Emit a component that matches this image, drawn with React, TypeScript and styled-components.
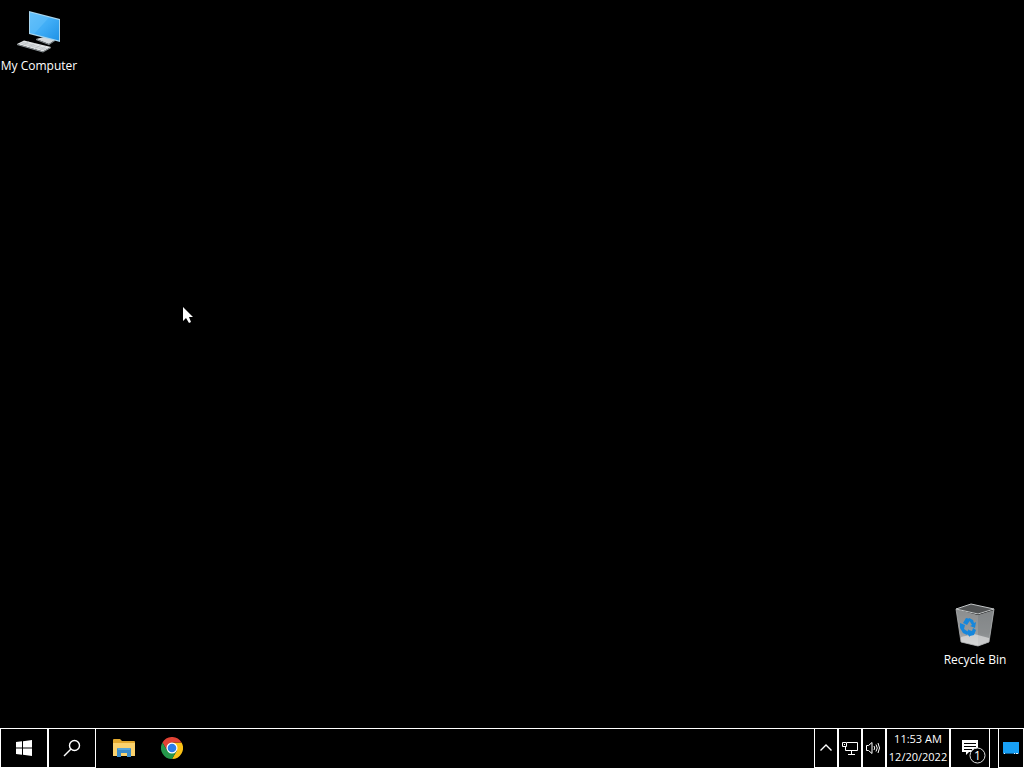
import React from "react";
import styled, { createGlobalStyle } from "styled-components";

const GlobalStyle = createGlobalStyle`
  * { box-sizing: border-box; }
  html, body { margin: 0; background: #000; }
  body { overflow: hidden; }
  button { appearance: none; padding: 0; margin: 0; background: transparent; color: #fff; font: inherit; cursor: default; }
  svg { display: block; flex: none; }
`;

const Screen = styled.div`
  display: flex;
  flex-direction: column;
  min-height: 100vh;
  background: #000;
  color: #fff;
  font-family: "Open Sans", "Noto Sans", sans-serif;
  font-size: 12px;
`;

const Desktop = styled.main`
  position: relative;
  flex: 1;
`;

const Shortcut = styled.button<{ $corner: "start" | "end" }>`
  position: absolute;
  ${(p) => (p.$corner === "start" ? "top: 8px; left: 1px;" : "right: 11px; bottom: 60px;")}
  display: flex;
  flex-direction: column;
  align-items: center;
  width: 76px;
  border: 0;
`;

const ShortcutLabel = styled.span`
  line-height: 16px;
  margin-top: 2px;
  white-space: nowrap;
`;

const Pointer = styled.svg`
  position: absolute;
  left: 182px;
  top: 306px;
`;

const Taskbar = styled.footer`
  display: flex;
  justify-content: space-between;
  height: 40px;
  border-top: 1px solid #fff;
`;

const Group = styled.div`
  display: flex;
`;

const BarButton = styled.button<{ $width: number; $plain?: boolean }>`
  display: flex;
  align-items: center;
  justify-content: center;
  width: ${(p) => p.$width}px;
  border: 1px solid ${(p) => (p.$plain ? "transparent" : "#fff")};
  border-top: 0;
`;

const Clock = styled(BarButton)`
  flex-direction: column;
  font-size: 11px;
  line-height: 18px;
`;

const ShowDesktop = styled(BarButton)`
  margin-left: 8px;
`;

const PinnedApps = styled.nav`
  display: flex;
  margin-left: 4px;
`;

const ComputerIcon = () => (
  <svg width="48" height="48" viewBox="0 0 48 48" aria-hidden="true">
    <defs>
      <linearGradient id="monitor" x1="0" y1="0" x2="1" y2="1">
        <stop offset="0" stopColor="#5cbcf8" />
        <stop offset=".5" stopColor="#40adf6" />
        <stop offset="1" stopColor="#1f92e6" />
      </linearGradient>
    </defs>
    <path d="M29 27l7 2v4h-7z" fill="#8f9aa1" />
    <path d="M21 31l8-2 11 3-6 4z" fill="#d3d8db" />
    <path d="M21 31l13 5 6-4v1l-6 4-13-5z" fill="#899195" />
    <path d="M14 3l31 8v23l-31-8z" fill="#a8d5ee" />
    <path d="M15 4.500l29 7.500v20.500L15 25z" fill="url(#monitor)" />
    <path d="M15 4.500l19 5L19 26l-4-1z" fill="#7accff" opacity=".3" />
    <path d="M2 36l7-3.500L36 39l-8 4.500z" fill="#e2e5e6" />
    <path d="M2 36l26 7.500 8-4.500v1l-8 4.500L2 37z" fill="#929a9e" />
    <path d="M5 35l25 7M7 34l25 7M8 37l6-3.500M14 39l6-3.500M20 40.500l6-3.500M25 42l6-3.500" stroke="#aab1b5" strokeWidth=".5" />
  </svg>
);

const RecycleIcon = () => (
  <svg width="48" height="48" viewBox="0 0 48 48" aria-hidden="true">
    <defs>
      <linearGradient id="bin" x1="0" y1="0" x2="0" y2="1">
        <stop offset="0" stopColor="#8b8d8e" />
        <stop offset=".65" stopColor="#9b9d9e" />
        <stop offset="1" stopColor="#bfc1c1" />
      </linearGradient>
    </defs>
    <path d="M5 7l22 6 16-5-5 32-11 4-17-4z" fill="url(#bin)" />
    <path d="M27 13l16-5-5 32-11 4z" fill="#74787a" opacity=".4" />
    <path d="M10 35l13-3 15 4v4l-11 4-17-4z" fill="#e3e3e3" opacity=".65" />
    <path d="M5 7l15-5 23 5-16 5z" fill="#515354" stroke="#c3c6c7" />
    <path d="M5 7l5 33 17 4 11-4 5-33" fill="none" stroke="#aeb1b2" strokeWidth=".8" />
    <g fill="#1687dc">
      <path d="M12 21l3-5 5 1-4 6z" />
      <path d="M18 16l4 2 1 3 2-1-1 6-5-2 2-1-3-5z" />
      <path d="M9 21l5 2-1 4 3 2v4l-4-2-3-5z" />
      <path d="M18 28l3 1 1-3 3 2-2 5-4 1v1l-4-4 3-4z" />
    </g>
  </svg>
);

const WindowsIcon = () => (
  <svg width="16" height="16" viewBox="0 0 16 16" fill="#fff" aria-hidden="true">
    <path d="M0 2l6-.7v6.200H0zM7 1.200L16 0v7.500H7zM0 8.500h6v6.200L0 14zM7 8.500h9V16l-9-1.200z" />
  </svg>
);

const SearchIcon = () => (
  <svg width="18" height="18" viewBox="0 0 18 18" fill="none" stroke="#fff" strokeWidth="1.4" aria-hidden="true">
    <circle cx="11.5" cy="6.5" r="5" />
    <path d="M8 10l-7 7" />
  </svg>
);

const FolderIcon = () => (
  <svg width="22" height="20" viewBox="0 0 22 20" aria-hidden="true">
    <path d="M0 2q0-1 1-1h6l2 2h12q1 0 1 1v3H0z" fill="#e3a92f" />
    <path d="M0 5h22v13H0z" fill="#fbd26d" />
    <path d="M4 19v-8q0-1 1-1h12q1 0 1 1v8h-4v-4H8v4z" fill="#3b8bc8" />
    <path d="M5 10h12v2H5z" fill="#56a5da" />
  </svg>
);

const ChromeIcon = () => (
  <svg width="22" height="22" viewBox="0 0 24 24" aria-hidden="true">
    <path d="M12 6h10.400A12 12 0 0 1 12 24l5.200-9z" fill="#fbc116" />
    <path d="M1.600 6l5.200 9 5.200-9h10.400A12 12 0 0 0 1.600 6z" fill="#e24335" />
    <path d="M1.600 6A12 12 0 0 0 12 24l5.200-9H6.800z" fill="#25984b" />
    <circle cx="12" cy="12" r="6" fill="#fff" />
    <circle cx="12" cy="12" r="4.700" fill="#2b7de9" />
  </svg>
);

const ChevronIcon = () => (
  <svg width="12" height="8" viewBox="0 0 12 8" fill="none" stroke="#fff" strokeWidth="1.4" aria-hidden="true">
    <path d="M.5 6.500L6 1l5.500 5.500" />
  </svg>
);

const NetworkIcon = () => (
  <svg width="16" height="14" viewBox="0 0 16 14" fill="none" stroke="#fff" aria-hidden="true">
    <path d="M5 1.500h10.500v8h-12V6M9.500 10v3M6 13.500h7M.5 1.500h4v4h-4zM2 3.500h1" />
  </svg>
);

const VolumeIcon = () => (
  <svg width="16" height="14" viewBox="0 0 16 14" fill="none" stroke="#fff" aria-hidden="true">
    <path d="M.5 4.500h2L6 1.500v11l-3.500-3h-2z" />
    <path d="M8 5q1.500 2 0 4M10 3.500q2.500 3.500 0 7M12 2q3 5 0 10" />
  </svg>
);

const MessagesIcon = () => (
  <svg width="32" height="32" viewBox="0 0 32 32" aria-hidden="true">
    <path d="M8 8h16v12h-9l-3 3v-3H8z" fill="#fff" />
    <path d="M10 11.500h12M10 14.500h12M10 17.500h8" stroke="#000" />
    <circle cx="23.500" cy="23.500" r="7.500" fill="#000" stroke="#ddd" />
    <text x="23.500" y="28" textAnchor="middle" fill="#fff" fontSize="12">1</text>
  </svg>
);

const ScreenIcon = () => (
  <svg width="16" height="12" viewBox="0 0 16 12" aria-hidden="true">
    <path d="M0 0h16v12H0z" fill="#18a0f5" />
    <path d="M0 11.500h16" stroke="#0d5f96" />
    <path d="M1 11.500h1M11 11.500h1M13 11.500h2" stroke="#e5f5ff" />
  </svg>
);

export default function App() {
  return (
    <Screen>
      <GlobalStyle />
      <Desktop>
        <Shortcut $corner="start">
          <ComputerIcon />
          <ShortcutLabel>My Computer</ShortcutLabel>
        </Shortcut>
        <Shortcut $corner="end">
          <RecycleIcon />
          <ShortcutLabel>Recycle Bin</ShortcutLabel>
        </Shortcut>
        <Pointer width="13" height="19" viewBox="0 0 13 19" aria-hidden="true">
          <path d="M1 1v14l3-3 3 5 2-1-2-5h4z" fill="#fff" />
        </Pointer>
      </Desktop>
      <Taskbar>
        <Group>
          <BarButton $width={48} aria-label="Start"><WindowsIcon /></BarButton>
          <BarButton $width={48} aria-label="Search"><SearchIcon /></BarButton>
          <PinnedApps aria-label="Pinned apps">
            <BarButton $width={48} $plain aria-label="File Explorer"><FolderIcon /></BarButton>
            <BarButton $width={48} $plain aria-label="Chrome"><ChromeIcon /></BarButton>
          </PinnedApps>
        </Group>
        <Group>
          <BarButton $width={24} aria-label="Show hidden icons"><ChevronIcon /></BarButton>
          <BarButton $width={24} aria-label="Network"><NetworkIcon /></BarButton>
          <BarButton $width={24} aria-label="Volume"><VolumeIcon /></BarButton>
          <Clock $width={64}>
            <span>11:53 AM</span>
            <span>12/20/2022</span>
          </Clock>
          <BarButton $width={40} aria-label="Notifications"><MessagesIcon /></BarButton>
          <ShowDesktop $width={26} aria-label="Show desktop"><ScreenIcon /></ShowDesktop>
        </Group>
      </Taskbar>
    </Screen>
  );
}
